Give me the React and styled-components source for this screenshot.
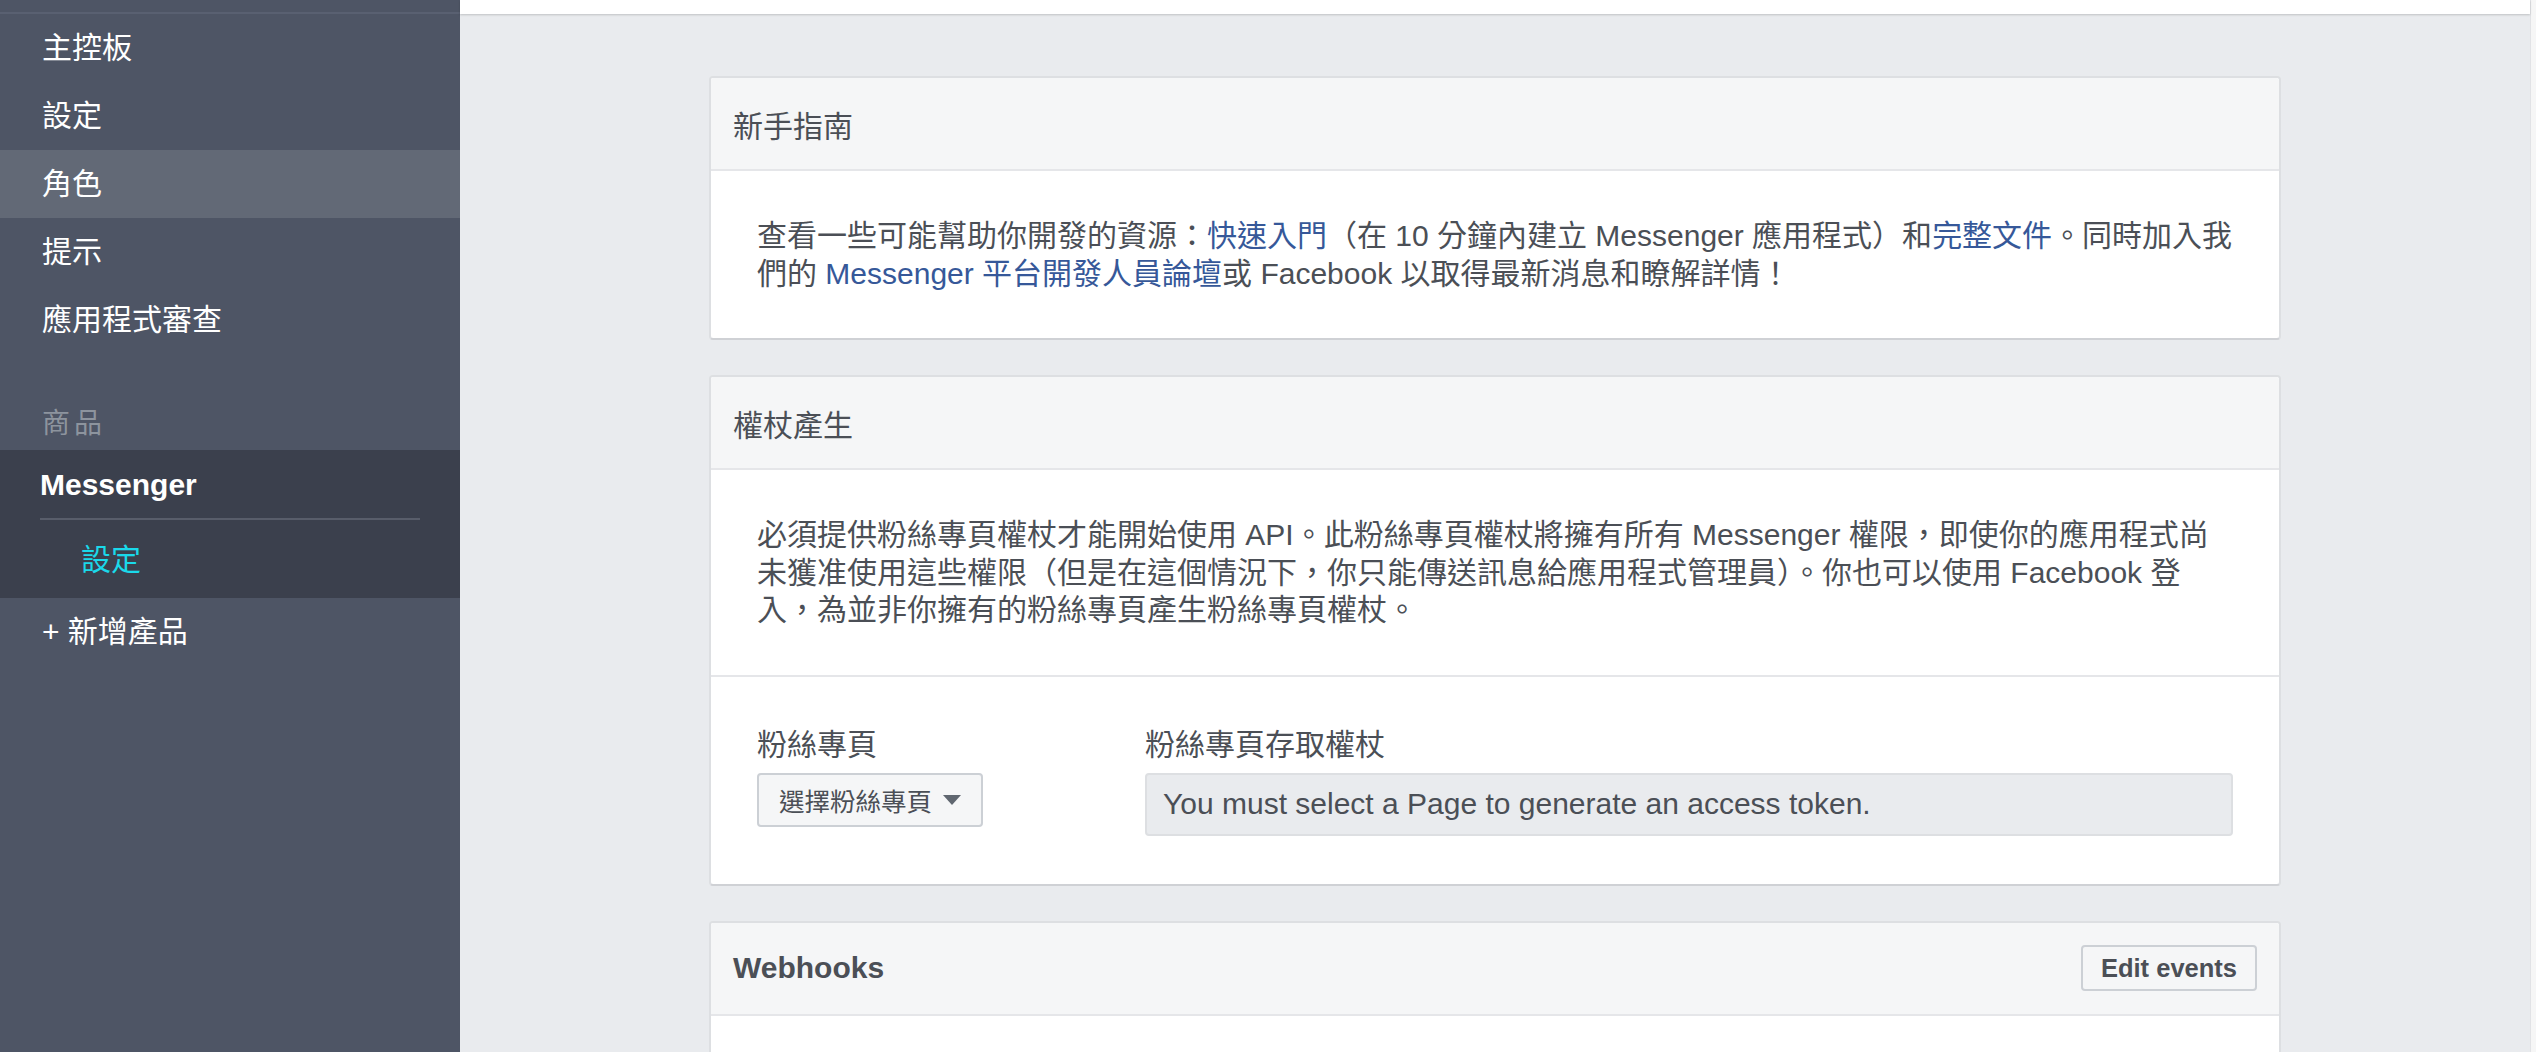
import React from 'react';
import styled, { createGlobalStyle } from 'styled-components';

const GlobalStyle = createGlobalStyle`
  html, body {
    margin: 0;
    padding: 0;
  }
  body {
    font-family: "Liberation Sans", "Noto Sans CJK TC", sans-serif;
    background: #e9ebee;
  }
  * {
    box-sizing: border-box;
  }
`;

const Page = styled.div`
  display: flex;
  height: 1052px;
  overflow: hidden;
`;

// 左側選單
const Sidebar = styled.nav`
  width: 460px;
  flex-shrink: 0;
  background: #4e5565;
  color: #fff;
  font-size: 30px;
`;

const SideTop = styled.div`
  height: 14px;
  border-bottom: 2px solid #596071;
`;

const NavItem = styled.div`
  height: 68px;
  line-height: 68px;
  padding-left: 42px;
  background: ${(p) => (p.$active ? '#626976' : 'transparent')};
`;

const SectionLabel = styled.div`
  margin: 50px 0 6px;
  padding-left: 42px;
  line-height: 40px;
  font-size: 28px;
  letter-spacing: 4px;
  color: #8d949e;
`;

const ProductGroup = styled.div`
  background: #3b404d;
  padding-bottom: 18px;
`;

const ProductHead = styled.div`
  margin: 0 40px;
  padding: 15px 0 13px;
  line-height: 40px;
  font-weight: bold;
  border-bottom: 2px solid #585d6a;
`;

const SubItem = styled.div`
  margin-top: 20px;
  padding-left: 81px;
  line-height: 40px;
  color: #1ad9ea;
`;

// 主內容
const Main = styled.main`
  flex: 1;
  min-width: 0;
  display: flex;
  flex-direction: column;
  background: #e9ebee;
`;

const TopBar = styled.div`
  height: 14px;
  flex-shrink: 0;
  background: #fff;
  box-shadow: 0 1px 2px rgba(0, 0, 0, 0.18);
  position: relative;
`;

const Content = styled.div`
  padding-top: 62px;
  display: flex;
  flex-direction: column;
  align-items: center;
`;

const ScrollTrack = styled.div`
  width: 6px;
  flex-shrink: 0;
  background: #f6f6f6;
  border-left: 1px solid #e2e3e6;
`;

const Card = styled.section`
  width: 1572px;
  flex-shrink: 0;
  background: #fff;
  border: 2px solid #dddfe2;
  border-bottom-color: #cfd1d5;
  border-radius: 4px;
  margin-bottom: 35px;
  overflow: hidden;
`;

const CardHeader = styled.header`
  height: 93px;
  display: flex;
  align-items: center;
  justify-content: space-between;
  padding: 0 22px;
  background: #f5f6f7;
  border-bottom: 2px solid #e5e6e9;
  font-size: 30px;
  color: #4b4f56;
  font-weight: ${(p) => (p.$bold ? 'bold' : 'normal')};
`;

const Para = styled.p`
  margin: 0;
  padding: 46px 30px 46px 46px;
  font-size: 30px;
  line-height: 37.5px;
  color: #4b4f56;
`;

const Link = styled.a`
  color: #365899;
  text-decoration: none;
`;

const FieldRow = styled.div`
  display: grid;
  grid-template-columns: 388px 1fr;
  padding: 46px 46px 48px;
  border-top: 2px solid #e5e6e9;
`;

const Label = styled.div`
  font-size: 30px;
  line-height: 44px;
  margin-bottom: 6px;
  color: #4b4f56;
`;

const SelectButton = styled.button`
  display: inline-flex;
  align-items: center;
  gap: 11px;
  height: 54px;
  padding: 0 20px;
  border: 2px solid #ccd0d5;
  border-radius: 4px;
  background: #f5f6f7;
  font-family: inherit;
  font-size: 25.5px;
  color: #4b4f56;
`;

const Caret = styled.span`
  width: 0;
  height: 0;
  border-left: 9px solid transparent;
  border-right: 9px solid transparent;
  border-top: 10px solid #606770;
`;

const TokenField = styled.div`
  height: 63px;
  display: flex;
  align-items: center;
  padding: 0 16px;
  background: #e9ebee;
  border: 2px solid #dddfe2;
  border-radius: 4px;
  font-size: 30px;
  color: #4b4f56;
`;

const EditButton = styled.button`
  height: 46px;
  padding: 0 18px;
  border: 2px solid #ccd0d5;
  border-radius: 4px;
  background: #f5f6f7;
  font-family: inherit;
  font-size: 25.5px;
  font-weight: bold;
  color: #4b4f56;
`;

const CardBody = styled.div`
  height: 200px;
`;

const App = () => {
  const navItems = ['主控板', '設定', '角色', '提示', '應用程式審查'];

  return (
    <Page>
      <GlobalStyle />
      <Sidebar>
        <SideTop />
        {navItems.map((item) => (
          <NavItem key={item} $active={item === '角色'}>
            {item}
          </NavItem>
        ))}
        <SectionLabel>商品</SectionLabel>
        <ProductGroup>
          <ProductHead>Messenger</ProductHead>
          <SubItem>設定</SubItem>
        </ProductGroup>
        <NavItem>+ 新增產品</NavItem>
      </Sidebar>

      <Main>
        <TopBar />
        <Content>
          <Card>
            <CardHeader>新手指南</CardHeader>
            <Para>
              查看一些可能幫助你開發的資源：<Link href="#">快速入門</Link>（在 10 分鐘內建立 Messenger 應用程式）和
              <Link href="#">完整文件</Link>。同時加入我
              <br />
              們的 <Link href="#">Messenger 平台開發人員論壇</Link>或 Facebook 以取得最新消息和瞭解詳情！
            </Para>
          </Card>

          <Card>
            <CardHeader>權杖產生</CardHeader>
            <Para>
              必須提供粉絲專頁權杖才能開始使用 API。此粉絲專頁權杖將擁有所有 Messenger 權限，即使你的應用程式尚
              <br />
              未獲准使用這些權限（但是在這個情況下，你只能傳送訊息給應用程式管理員）。你也可以使用 Facebook 登
              <br />
              入，為並非你擁有的粉絲專頁產生粉絲專頁權杖。
            </Para>
            <FieldRow>
              <div>
                <Label>粉絲專頁</Label>
                <SelectButton>
                  選擇粉絲專頁
                  <Caret />
                </SelectButton>
              </div>
              <div>
                <Label>粉絲專頁存取權杖</Label>
                <TokenField>You must select a Page to generate an access token.</TokenField>
              </div>
            </FieldRow>
          </Card>

          <Card>
            <CardHeader $bold>
              Webhooks
              <EditButton>Edit events</EditButton>
            </CardHeader>
            <CardBody />
          </Card>
        </Content>
      </Main>
      <ScrollTrack />
    </Page>
  );
};

export default App;
